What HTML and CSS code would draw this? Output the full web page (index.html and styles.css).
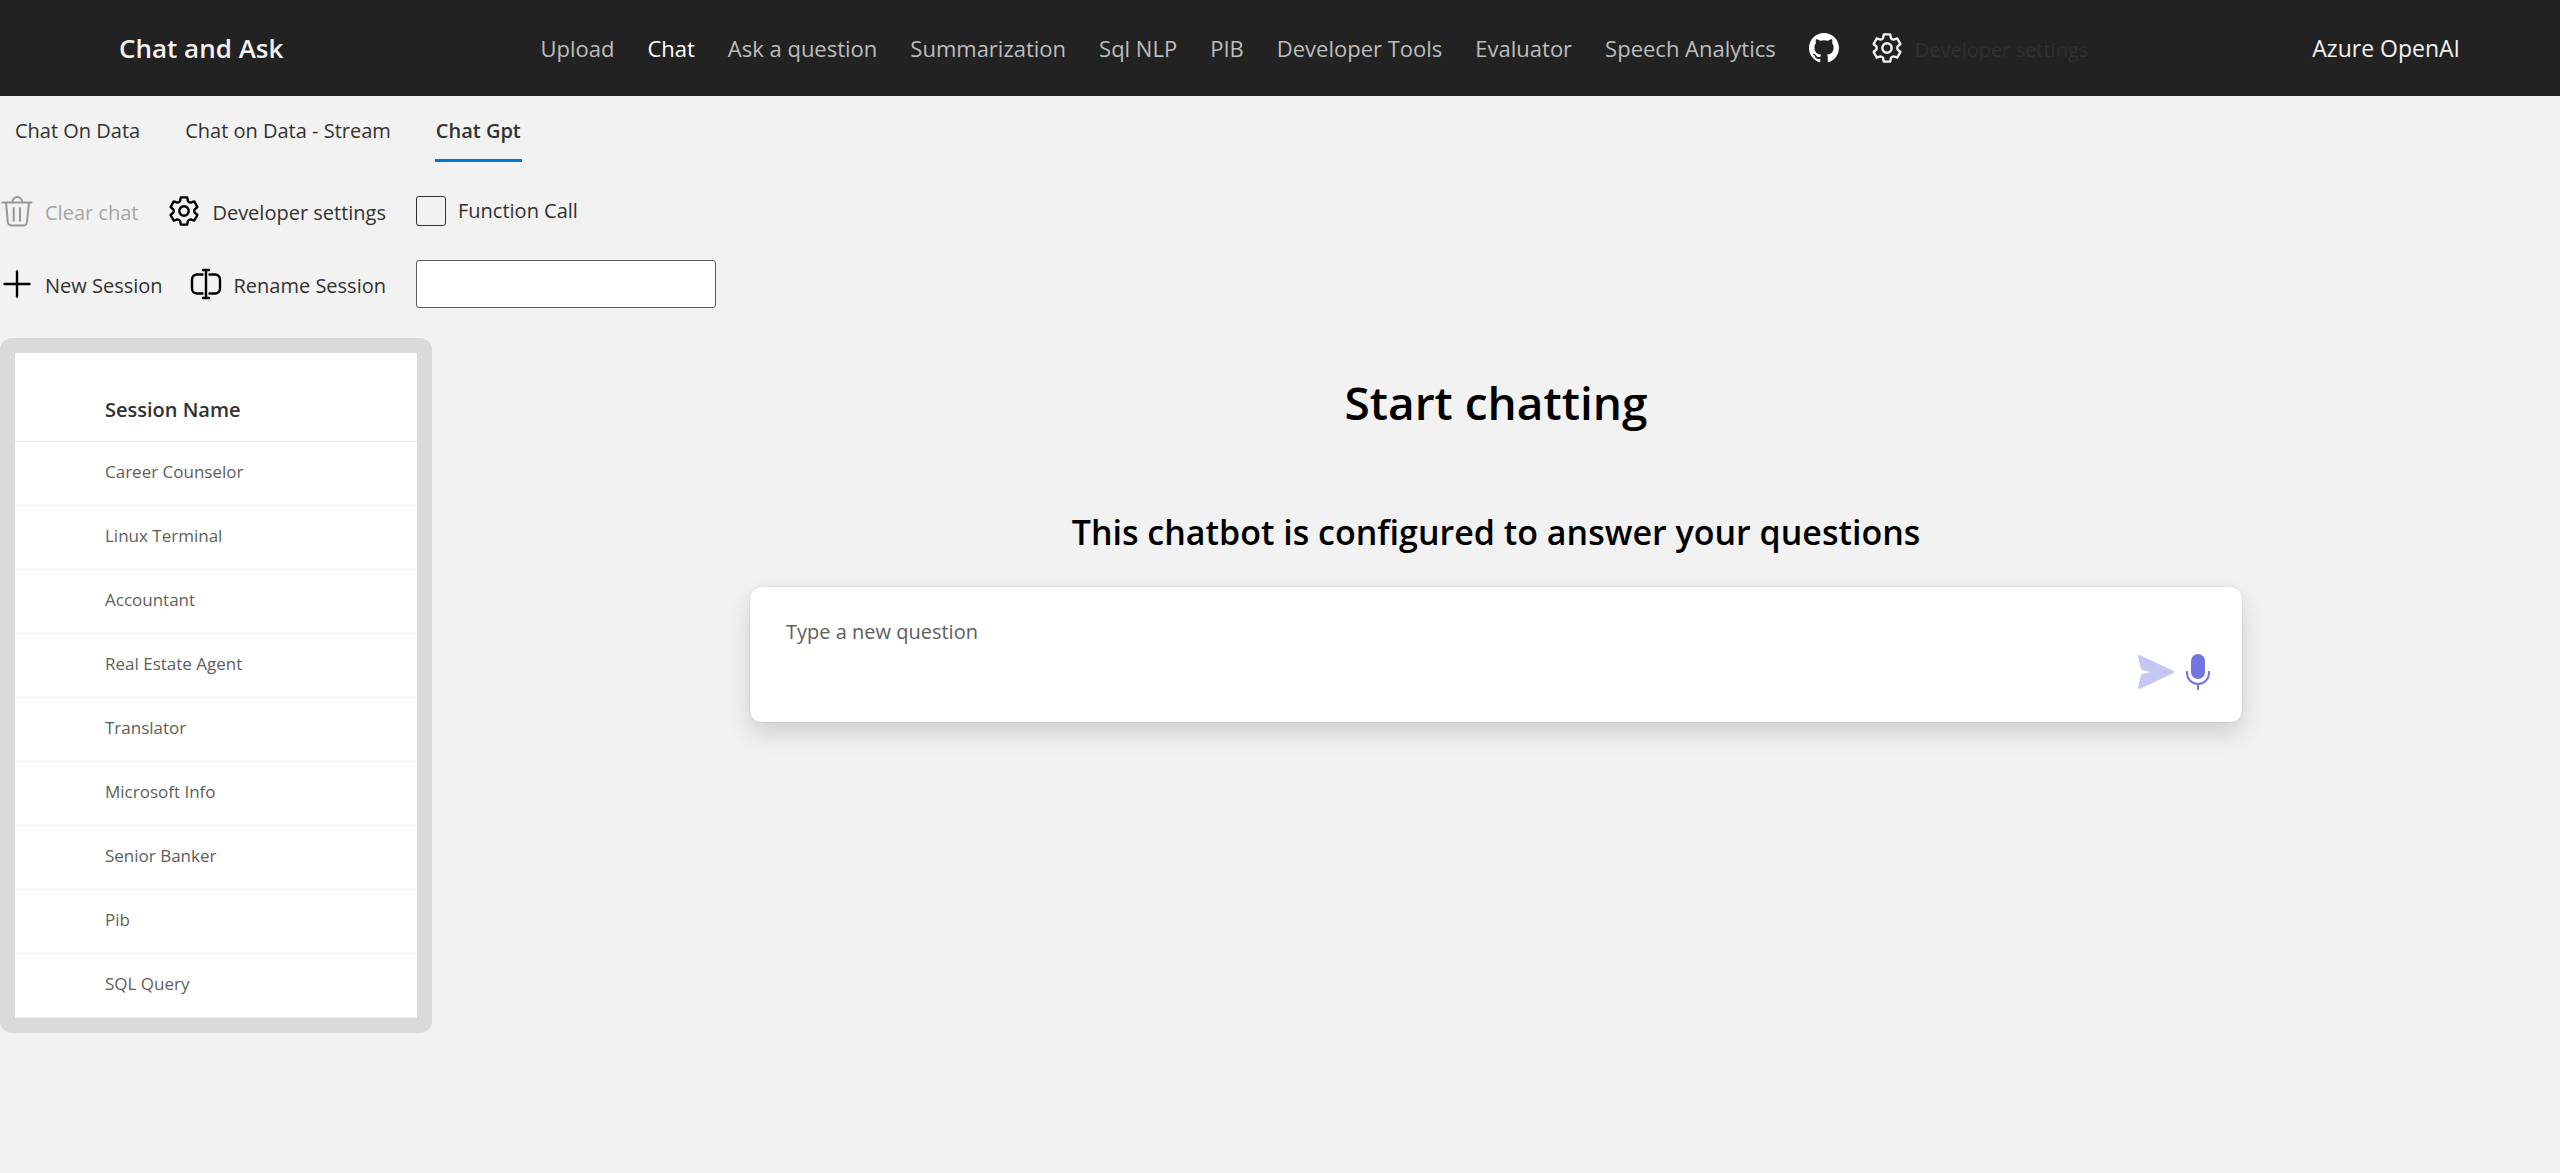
FILE: index.html
```html
<!DOCTYPE html>
<html lang="en">
<head>
<meta charset="utf-8">
<meta name="viewport" content="width=device-width, initial-scale=1">
<title>Chat and Ask</title>
<link rel="stylesheet" href="styles.css">
</head>
<body>
<svg class="sprite" aria-hidden="true">
  <symbol id="gear" viewBox="-15 -15 30 30">
    <path stroke-width="2.4" d="M-3.2-13.6H3.2L4-9.8Q5-8.700 6.5-8.400L10.2-9.6 13.4-4 10.5-1.4Q10 0 10.500 1.4L13.4 4 10.2 9.6 6.5 8.4Q5 8.700 4 9.8L3.2 13.6H-3.2L-4 9.8Q-5 8.700-6.5 8.4L-10.2 9.6-13.4 4-10.5 1.4Q-10 0-10.500-1.4L-13.4-4-10.2-9.6-6.5-8.4Q-5-8.700-4-9.8Z"/>
    <circle stroke-width="2.4" r="4.7"/>
  </symbol>
</svg>

<header class="header">
  <a class="brand" href="#">Chat and Ask</a>
  <nav class="nav" aria-label="Main">
    <a href="#">Upload</a>
    <a class="current" href="#" aria-current="page">Chat</a>
    <a href="#">Ask a question</a>
    <a href="#">Summarization</a>
    <a href="#">Sql NLP</a>
    <a href="#">PIB</a>
    <a href="#">Developer Tools</a>
    <a href="#">Evaluator</a>
    <a href="#">Speech Analytics</a>
    <a class="github" href="#" aria-label="GitHub">
      <svg class="icon-fill" viewBox="0 0 16 16" aria-hidden="true"><path d="M8 0C3.58 0 0 3.58 0 8c0 3.54 2.29 6.53 5.47 7.59.4.07.55-.17.55-.38 0-.19-.01-.82-.01-1.49-2.01.37-2.53-.49-2.69-.94-.09-.23-.48-.94-.82-1.13-.28-.15-.68-.52-.01-.53.63-.01 1.08.58 1.23.82.72 1.21 1.87.87 2.33.66.07-.52.28-.87.51-1.07-1.78-.2-3.64-.89-3.64-3.95 0-.87.31-1.59.82-2.15-.08-.2-.36-1.02.08-2.12 0 0 .67-.21 2.2.82.64-.18 1.32-.27 2-.27s1.36.09 2 .27c1.53-1.04 2.2-.82 2.2-.82.44 1.1.16 1.92.08 2.12.51.56.82 1.27.82 2.15 0 3.07-1.87 3.75-3.65 3.95.29.25.54.73.54 1.48 0 1.07-.01 1.93-.01 2.2 0 .21.15.46.55.38A8.01 8.01 0 0 0 16 8c0-4.42-3.58-8-8-8z"/></svg>
    </a>
    <button class="command nav-settings" type="button">
      <svg class="icon" aria-hidden="true"><use href="#gear"/></svg>
      <span>Developer settings</span>
    </button>
  </nav>
  <p class="product">Azure OpenAI</p>
</header>

<div class="tabs" role="tablist">
  <button class="tab" type="button" role="tab" aria-selected="false">Chat On Data</button>
  <button class="tab" type="button" role="tab" aria-selected="false">Chat on Data - Stream</button>
  <button class="tab" type="button" role="tab" aria-selected="true">Chat Gpt</button>
</div>

<div class="toolbar">
  <div class="toolbar-row">
    <div class="commands">
      <button class="command" type="button" disabled>
        <svg class="icon" viewBox="0 0 30 30" aria-hidden="true"><path d="M10.3 6.4a5 5.4 0 0 1 10 0M.5 6.4h29M4 6.4 5.8 26q.4 3.4 3.6 3.4h12q3.2 0 3.6-3.4L27 6.4M11.7 12v12.7M18 12v12.7"/></svg>
        <span>Clear chat</span>
      </button>
      <button class="command" type="button">
        <svg class="icon" aria-hidden="true"><use href="#gear"/></svg>
        <span>Developer settings</span>
      </button>
    </div>
    <label class="check"><input type="checkbox"><span>Function Call</span></label>
  </div>
  <div class="toolbar-row">
    <div class="commands">
      <button class="command" type="button">
        <svg class="icon" viewBox="0 0 30 30" aria-hidden="true"><path stroke-width="2.4" d="M15 2.500v25M2.500 15h25"/></svg>
        <span>New Session</span>
      </button>
      <button class="command" type="button">
        <svg class="icon" viewBox="0 0 30 30" aria-hidden="true"><path stroke-width="2.4" d="M11.500 5.500H6a5 5 0 0 0-5 5v9a5 5 0 0 0 5 5h5.500M18.500 5.500h5.500a5 5 0 0 1 5 5v9a5 5 0 0 1-5 5h-5.500M15 1v28M12 1h6M12 29h6"/></svg>
        <span>Rename Session</span>
      </button>
    </div>
    <input class="session-input" type="text" aria-label="Session name">
  </div>
</div>

<div class="workspace">
  <aside class="sessions">
    <table>
      <thead><tr><th scope="col">Session Name</th></tr></thead>
      <tbody>
        <tr><td>Career Counselor</td></tr>
        <tr><td>Linux Terminal</td></tr>
        <tr><td>Accountant</td></tr>
        <tr><td>Real Estate Agent</td></tr>
        <tr><td>Translator</td></tr>
        <tr><td>Microsoft Info</td></tr>
        <tr><td>Senior Banker</td></tr>
        <tr><td>Pib</td></tr>
        <tr><td>SQL Query</td></tr>
      </tbody>
    </table>
  </aside>
  <main class="chat">
    <h1>Start chatting</h1>
    <h2>This chatbot is configured to answer your questions</h2>
    <form class="question">
      <textarea placeholder="Type a new question" aria-label="Question"></textarea>
      <div class="question-actions">
        <button class="send" type="button" aria-label="Ask question">
          <svg viewBox="0 0 36 36" aria-hidden="true"><path d="M1.5 2.5 34.5 18 1.5 33.5 4.5 21.5 20 18 4.5 14.5Z"/></svg>
        </button>
        <button class="mic" type="button" aria-label="Speak question">
          <svg viewBox="0 0 24 36" aria-hidden="true"><rect x="5" y="0" width="14" height="25" rx="7"/><path d="M1 17v2a11 11 0 0 0 22 0v-2M12 30v6"/></svg>
        </button>
      </div>
    </form>
  </main>
</div>
</body>
</html>
```
FILE: styles.css
```css
* {
  box-sizing: border-box;
}

body {
  margin: 0;
  min-height: 100vh;
  background: #f2f2f2;
  color: #323130;
  font: 20px/30px "Open Sans", "Noto Sans", sans-serif;
}

a {
  color: inherit;
  text-decoration: none;
}

button {
  padding: 0;
  border: 0;
  background: none;
  color: inherit;
  font: inherit;
}

svg {
  display: block;
}

.sprite {
  display: none;
}

.icon {
  width: 30px;
  height: 30px;
  flex: none;
  overflow: visible;
  fill: none;
  stroke: #000;
  stroke-width: 2;
  stroke-linejoin: round;
  stroke-linecap: round;
}

/* Header */
.header {
  display: flex;
  align-items: center;
  justify-content: space-between;
  min-height: 96px;
  padding: 0 100px 0 119px;
  background: #222;
  color: #f2f2f2;
}

.brand {
  font-size: 26px;
  font-weight: 600;
}

.nav {
  display: flex;
  align-items: center;
  gap: 33px;
  padding-left: 33px;
  color: #bdbdbd;
  font-size: 22px;
}

.nav .current {
  color: #fff;
}

.icon-fill {
  width: 30px;
  height: 30px;
  fill: #fff;
}

.nav-settings {
  color: #303030;
  font-size: 20px;
}

.nav-settings .icon {
  stroke: #f2f2f2;
}

.product {
  margin: 0;
  font-size: 23px;
}

/* Tabs */
.tabs {
  display: flex;
  gap: 43px;
  padding-left: 14px;
}

.tab {
  height: 66px;
  padding: 6px 1px 0;
  border-bottom: 3px solid transparent;
}

.tab[aria-selected="true"] {
  border-color: #0078d4;
  font-weight: 600;
}

/* Toolbar */
.toolbar {
  display: grid;
  gap: 25px;
  padding: 25px 0 30px 2px;
}

.toolbar-row {
  display: flex;
  align-items: center;
  gap: 30px;
  height: 48px;
}

.commands {
  display: flex;
  justify-content: space-between;
  width: 384px;
}

.command {
  display: flex;
  align-items: center;
  gap: 13px;
}

.command span {
  padding-top: 3px;
}

.command:disabled {
  color: #a6a6a6;
}

.command:disabled .icon {
  stroke: #979797;
}

.check {
  display: flex;
  align-items: center;
  gap: 12px;
}

.check input {
  appearance: none;
  width: 30px;
  height: 30px;
  margin: 0;
  border: 1px solid #323130;
  border-radius: 3px;
}

.session-input {
  width: 300px;
  height: 48px;
  padding: 0 12px;
  border: 1px solid #605e5c;
  border-radius: 3px;
  background: #fff;
  font: inherit;
}

/* Session list and chat */
.workspace {
  display: flex;
  align-items: flex-start;
}

.sessions {
  flex: none;
  width: 432px;
  border: 15px solid #dadada;
  border-radius: 12px;
  background: #fff;
}

.sessions table {
  width: 100%;
  border-spacing: 0;
}

.sessions th,
.sessions td {
  padding: 0 12px 4px 90px;
  border-bottom: 1px solid #f0f0f0;
  text-align: left;
}

.sessions th {
  height: 89px;
  padding-top: 30px;
  border-color: #e8e8e8;
  font-weight: 600;
}

.sessions td {
  height: 64px;
  color: #605e5c;
  font-size: 17px;
}

.chat {
  display: flex;
  flex: 1;
  flex-direction: column;
  align-items: center;
  padding: 32px 30px;
  color: #000;
  text-align: center;
}

.chat h1 {
  margin: 0 0 74px;
  font-size: 46px;
  font-weight: 600;
  line-height: 64px;
}

.chat h2 {
  margin: 0 0 31px;
  font-size: 34px;
  font-weight: 600;
  line-height: 48px;
}

.question {
  display: flex;
  width: 100%;
  max-width: 1492px;
  min-height: 135px;
  padding: 30px 32px 32px 36px;
  border-radius: 12px;
  background: #fff;
  box-shadow: 0 12px 24px rgb(0 0 0 / 14%), 0 0 3px rgb(0 0 0 / 12%);
}

.question textarea {
  flex: 1;
  padding: 0;
  border: 0;
  outline: 0;
  resize: none;
  background: none;
  font: inherit;
}

.question textarea::placeholder {
  color: #605e5c;
}

.question-actions {
  display: flex;
  align-items: flex-end;
  gap: 12px;
}

.send svg {
  width: 36px;
  height: 36px;
  fill: #c7c7f5;
  stroke: #c7c7f5;
  stroke-width: 3;
  stroke-linejoin: round;
}

.mic svg {
  width: 24px;
  height: 36px;
  fill: #7376e1;
}

.mic path {
  fill: none;
  stroke: #7376e1;
  stroke-width: 2;
}
```
